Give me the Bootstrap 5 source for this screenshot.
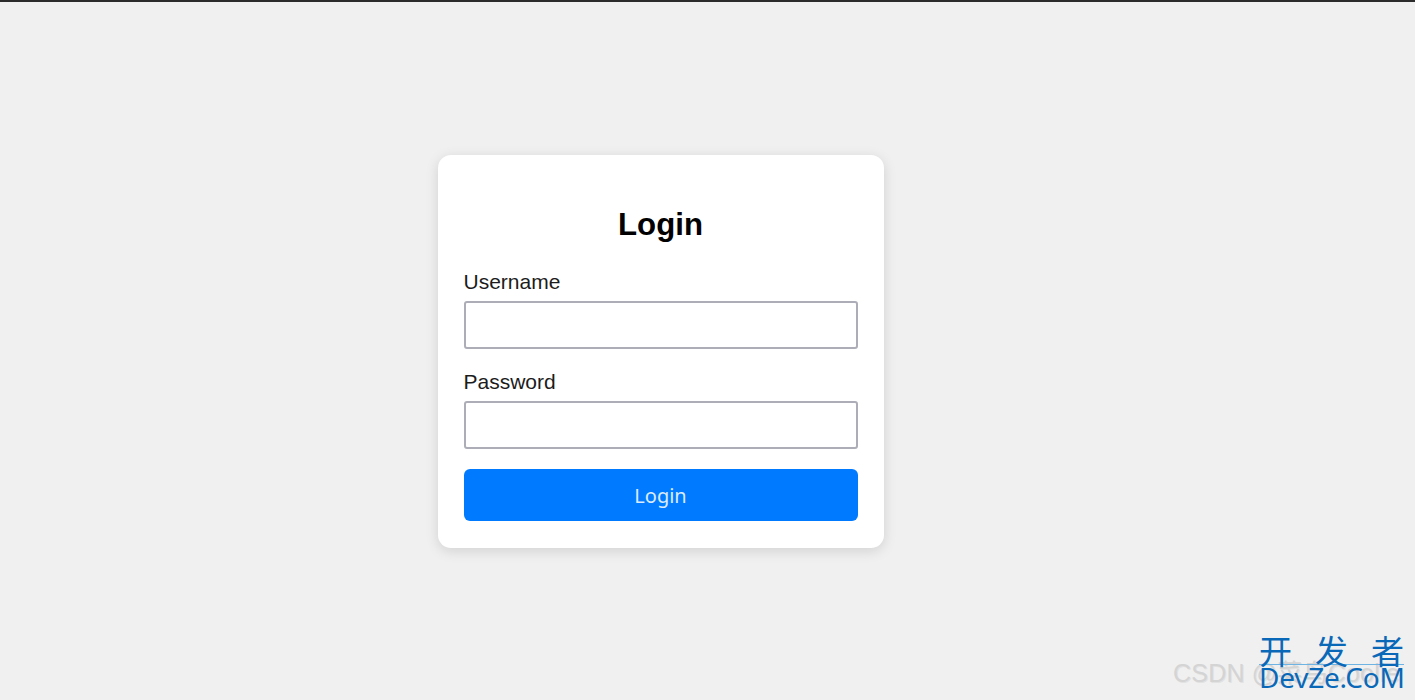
<!DOCTYPE html>
<html lang="en">
<head>
<meta charset="utf-8">
<title>Login</title>
<link href="https://cdn.jsdelivr.net/npm/bootstrap@5.3.0/dist/css/bootstrap.min.css" rel="stylesheet">
<style>
html, body { height: 100%; }
body { background: #f0f0f0; font-family: "Liberation Sans", Arial, sans-serif; overflow: hidden; border-top: 2px solid #2b2b2b; }
.stage { height: 698px; padding-bottom: 2px; padding-right: 94px; }
.login-box { width: 446px; height: 393px; margin-top: 153px; background: #fff; border-radius: 13px; padding: 26px; box-shadow: 0 3px 13px rgba(0,0,0,.13); }
.login-title { font-size: 31.2px; font-weight: 700; line-height: 36px; color: #000; margin: 26px 0 26px; text-align: center; }
.login-label { font-size: 21px; line-height: 25px; color: #1c1c1c; margin-bottom: 7px; display: block; }
.login-input { display: block; width: 100%; height: 48px; border: 2px solid #adadb7; border-radius: 3px; background: #fff; margin-bottom: 20px; padding: 0 8px; }
.login-input:focus { outline: none; }
.login-btn { width: 100%; height: 52px; background: #007bff; border: 0; border-radius: 6px; color: #dcebff; font-family: "Noto Sans", sans-serif; font-size: 20px; padding: 2px 0 0; }
.wm-csdn { position: absolute; left: 1173px; top: 658px; font-size: 25px; line-height: 30px; color: #d4d4d4; text-shadow: 1px 1px 0 #e2e2e2; white-space: nowrap; font-family: "Liberation Sans", "Noto Sans CJK SC", sans-serif; letter-spacing: .2px; }
.wm-site { position: absolute; left: 1259px; top: 632px; width: 145px; color: #0a68b8; font-family: "Noto Sans", "Noto Sans CJK SC", sans-serif; }
.wm-cn { display: flex; justify-content: space-between; font-family: "Noto Sans CJK SC", sans-serif; font-size: 33px; line-height: 37px; height: 32px; font-weight: 400; border-bottom: 1px solid #6fb3e3; box-sizing: content-box; }
.wm-en { font-size: 28px; line-height: 25px; white-space: nowrap; letter-spacing: -.25px; }
</style>
</head>
<body>
<div class="stage d-flex justify-content-center align-items-start">
  <div class="login-box">
    <h2 class="login-title">Login</h2>
    <form>
      <label class="login-label" for="u">Username</label>
      <input class="login-input" id="u" type="text">
      <label class="login-label" for="p">Password</label>
      <input class="login-input" id="p" type="password">
      <button class="login-btn" type="button">Login</button>
    </form>
  </div>
</div>
<div class="wm-csdn">CSDN @菜鸟Coolie</div>
<div class="wm-site">
  <div class="wm-cn"><span>开</span><span>发</span><span>者</span></div>
  <div class="wm-en">DevZe.CoM</div>
</div>
<script src="https://cdn.jsdelivr.net/npm/bootstrap@5.3.0/dist/js/bootstrap.bundle.min.js"></script>
</body>
</html>
